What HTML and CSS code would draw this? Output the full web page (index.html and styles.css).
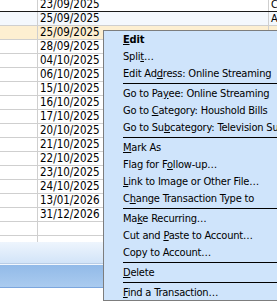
FILE: index.html
```html
<!DOCTYPE html>
<html>
<head>
    <title>Register</title>
    <link rel="stylesheet" href="styles.css">
</head>
<body>
    <div class="register">
        <div class="row divider"><div class="cell blank"></div><div class="cell date">23/09/2025</div><div class="cell more">C</div></div>
        <div class="row current"><div class="cell blank"></div><div class="cell date">25/09/2025</div><div class="cell more">A</div></div>
        <div class="row selected"><div class="cell blank"></div><div class="cell date">25/09/2025</div><div class="cell more">-</div></div>
        <div class="row"><div class="cell blank"></div><div class="cell date">28/09/2025</div><div class="cell more"></div></div>
        <div class="row"><div class="cell blank"></div><div class="cell date">04/10/2025</div><div class="cell more"></div></div>
        <div class="row"><div class="cell blank"></div><div class="cell date">06/10/2025</div><div class="cell more"></div></div>
        <div class="row"><div class="cell blank"></div><div class="cell date">15/10/2025</div><div class="cell more"></div></div>
        <div class="row"><div class="cell blank"></div><div class="cell date">16/10/2025</div><div class="cell more"></div></div>
        <div class="row"><div class="cell blank"></div><div class="cell date">17/10/2025</div><div class="cell more"></div></div>
        <div class="row"><div class="cell blank"></div><div class="cell date">20/10/2025</div><div class="cell more"></div></div>
        <div class="row"><div class="cell blank"></div><div class="cell date">21/10/2025</div><div class="cell more"></div></div>
        <div class="row"><div class="cell blank"></div><div class="cell date">22/10/2025</div><div class="cell more"></div></div>
        <div class="row"><div class="cell blank"></div><div class="cell date">23/10/2025</div><div class="cell more"></div></div>
        <div class="row"><div class="cell blank"></div><div class="cell date">24/10/2025</div><div class="cell more"></div></div>
        <div class="row"><div class="cell blank"></div><div class="cell date">13/01/2026</div><div class="cell more"></div></div>
        <div class="row"><div class="cell blank"></div><div class="cell date">31/12/2026</div><div class="cell more"></div></div>
        <div class="row"><div class="cell blank"></div><div class="cell date"></div><div class="cell more"></div></div>
        <div class="row"><div class="cell blank"></div><div class="cell date"></div><div class="cell more"></div></div>
    </div>
    <div class="footer-fade"></div>
    <div class="footer-bar"></div>

    <div class="context-menu">
        <div class="menu-item default"><u>E</u>dit</div>
        <div class="menu-item">Spli<u>t</u>…</div>
        <div class="menu-item">Edit Ad<u>d</u>ress: Online Streaming</div>
        <div class="menu-sep"></div>
        <div class="menu-item">Go to Pa<u>y</u>ee: Online Streaming</div>
        <div class="menu-item">Go to <u>C</u>ategory: Houshold Bills</div>
        <div class="menu-item">Go to Su<u>b</u>category: Television Subscriptions</div>
        <div class="menu-sep"></div>
        <div class="menu-item"><u>M</u>ark As</div>
        <div class="menu-item">Flag for F<u>o</u>llow-up…</div>
        <div class="menu-item"><u>L</u>ink to Image or Other File…</div>
        <div class="menu-item">C<u>h</u>ange Transaction Type to</div>
        <div class="menu-sep"></div>
        <div class="menu-item">Ma<u>k</u>e Recurring…</div>
        <div class="menu-item">Cut and <u>P</u>aste to Account…</div>
        <div class="menu-item">Copy to Account…</div>
        <div class="menu-sep"></div>
        <div class="menu-item"><u>D</u>elete</div>
        <div class="menu-sep"></div>
        <div class="menu-item"><u>F</u>ind a Transaction…</div>
    </div>
</body>
</html>
```

FILE: styles.css
```css
body {
    margin: 0;
    background-color: #fff;
    font-family: "DejaVu Sans Condensed", "DejaVu Sans", sans-serif;
    font-size: 11px;
    color: #000;
    overflow: hidden;
}

.register {
    margin-top: -2px;
    height: 244px;
    overflow: hidden;
}

.row {
    display: flex;
    height: 13px;
    line-height: 13px;
    border-bottom: 1px solid #cfcfcf;
    background-color: #fff;
}

.row.divider {
    border-bottom-color: #1a1a1a;
}

.row.current {
    background-color: #f4f8fd;
}

.row.selected {
    background-color: #fdefd1;
}

.cell {
    white-space: nowrap;
    overflow: hidden;
}

.blank {
    width: 37px;
    border-right: 1px solid #cfcfcf;
}

.date {
    width: 228px;
    padding-left: 2px;
    border-right: 1px solid #cfcfcf;
    font-size: 11.5px;
}

.more {
    flex: 1;
    padding-left: 2px;
}

.footer-fade {
    height: 21px;
    background: linear-gradient(#eef5fd, #d2e4f8);
    border-bottom: 1px solid #b9cde6;
}

.footer-bar {
    height: 22px;
    border-top: 1px solid #f2f7fd;
    background: linear-gradient(#92bae8, #aacbef);
    border-bottom: 1px solid #7ba6de;
}

.context-menu {
    position: absolute;
    left: 103px;
    top: 30px;
    width: 200px;
    height: 269px;
    background-color: #cfe4fb;
    border: 1px solid #7d7d7d;
    overflow: hidden;
}

.menu-item {
    height: 17px;
    line-height: 17px;
    padding-left: 19px;
    white-space: nowrap;
    letter-spacing: -0.2px;
}

.menu-item.default {
    font-weight: bold;
}

.menu-sep {
    height: 1px;
    margin: 1px 0 1px 19px;
    background-color: #000;
}
```
